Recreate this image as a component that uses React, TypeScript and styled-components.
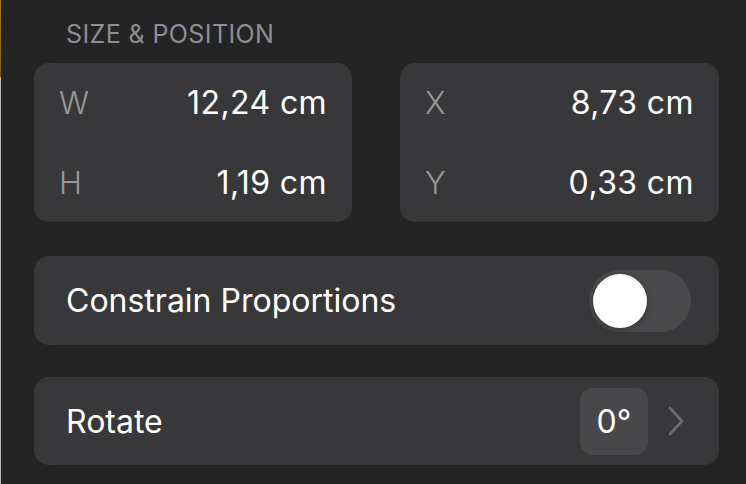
import React from "react";
import styled, { createGlobalStyle } from "styled-components";

const GlobalStyle = createGlobalStyle`
    html, body {
        margin: 0;
        padding: 0;
        background: #242424;
    }
    body {
        font-family: Inter, "Liberation Sans", sans-serif;
        -webkit-font-smoothing: antialiased;
    }
`;

const PanelSC = styled.div`
    position: relative;
    width: 746px;
    height: 484px;
    box-sizing: border-box;
    padding: 19px 27px 0 34px;
    background: #242424;
    display: flex;
    flex-direction: column;
    overflow: hidden;
    &::before {
        content: "";
        position: absolute;
        left: 0;
        top: 0;
        width: 1px;
        height: 100%;
        background: linear-gradient(#a27a1c 0, #7e5f14 77px, #b8b8b8 77px);
    }
`;

const SectionTitleSC = styled.div`
    margin-left: 32px;
    height: 30px;
    line-height: 30px;
    font-size: 25px;
    letter-spacing: 0.4px;
    color: #8e8e93;
`;

const GridSC = styled.div`
    display: grid;
    grid-template-columns: 318px 319px;
    column-gap: 48px;
    margin-top: 14px;
`;

const CardSC = styled.div<{ $height?: number; $gap?: number }>`
    background: #38383a;
    border-radius: 15px;
    box-sizing: border-box;
    height: ${(p) => p.$height ?? 89}px;
    margin-top: ${(p) => p.$gap ?? 0}px;
`;

const FieldRowSC = styled.div`
    display: flex;
    align-items: center;
    justify-content: space-between;
    height: 79.5px;
    padding: 0 25px 0 25px;
`;

const FieldLabelSC = styled.span`
    font-size: 31px;
    font-weight: 300;
    color: #98989d;
`;

const FieldValueSC = styled.span`
    font-size: 32px;
    letter-spacing: 0.4px;
    color: #ffffff;
`;

const ListRowSC = styled(CardSC)`
    display: flex;
    align-items: center;
    justify-content: space-between;
    padding: 0 28px 0 32px;
`;

const RowTitleSC = styled.span`
    font-size: 32px;
    color: #ffffff;
`;

const ToggleSC = styled.div<{ $on?: boolean }>`
    position: relative;
    width: 102px;
    height: 62px;
    border-radius: 31px;
    background: ${(p) => (p.$on ? "#34c759" : "#4a4a4c")};
    &::after {
        content: "";
        position: absolute;
        top: 4px;
        left: ${(p) => (p.$on ? "44px" : "4px")};
        width: 54px;
        height: 54px;
        border-radius: 50%;
        background: #ffffff;
        box-shadow: 0 2px 6px rgba(0, 0, 0, 0.25);
    }
`;

const TrailSC = styled.div`
    display: flex;
    align-items: center;
    gap: 20px;
    margin-right: 7px;
`;

const ValueBoxSC = styled.div`
    width: 68px;
    height: 67px;
    border-radius: 13px;
    background: #48484a;
    display: flex;
    align-items: center;
    justify-content: center;
    font-size: 32px;
    color: #ffffff;
`;

const Chevron = () => (
    <svg width="16" height="30" viewBox="0 0 16 30">
        <path d="M2 2 L14 15 L2 28" fill="none" stroke="#6c6c70" strokeWidth="2.6" strokeLinecap="round" strokeLinejoin="round" />
    </svg>
);

const fields = [
    [
        { label: "W", value: "12,24 cm" },
        { label: "H", value: "1,19 cm" },
    ],
    [
        { label: "X", value: "8,73 cm" },
        { label: "Y", value: "0,33 cm" },
    ],
];

export default function App() {
    return (
        <>
            <GlobalStyle />
            <PanelSC>
                <SectionTitleSC>SIZE &amp; POSITION</SectionTitleSC>
                <GridSC>
                    {fields.map((group, i) => (
                        <CardSC key={i} $height={159}>
                            {group.map((f) => (
                                <FieldRowSC key={f.label}>
                                    <FieldLabelSC>{f.label}</FieldLabelSC>
                                    <FieldValueSC>{f.value}</FieldValueSC>
                                </FieldRowSC>
                            ))}
                        </CardSC>
                    ))}
                </GridSC>
                <ListRowSC $height={89} $gap={34}>
                    <RowTitleSC>Constrain Proportions</RowTitleSC>
                    <ToggleSC />
                </ListRowSC>
                <ListRowSC $height={88} $gap={32}>
                    <RowTitleSC>Rotate</RowTitleSC>
                    <TrailSC>
                        <ValueBoxSC>0°</ValueBoxSC>
                        <Chevron />
                    </TrailSC>
                </ListRowSC>
            </PanelSC>
        </>
    );
}
